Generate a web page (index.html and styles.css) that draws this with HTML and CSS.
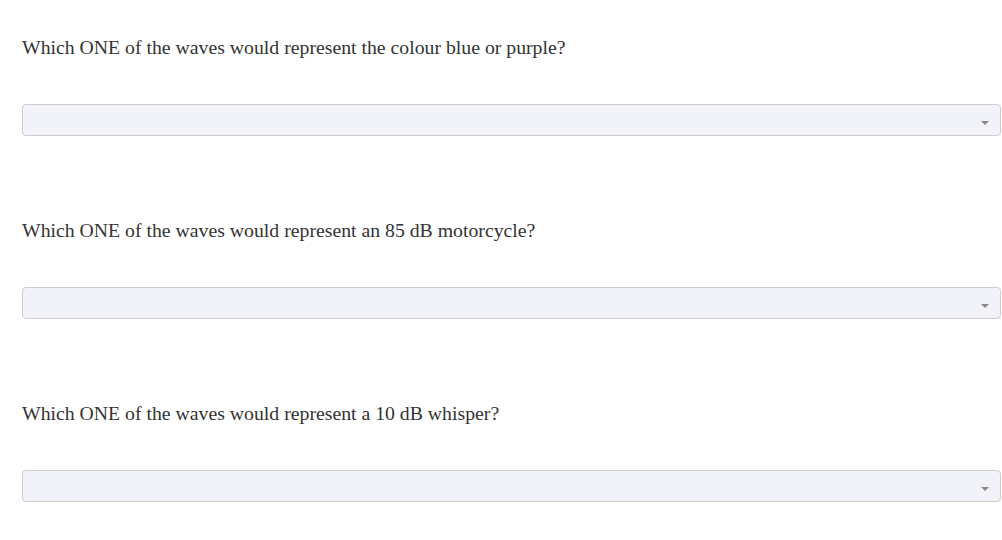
FILE: index.html
```html
<!DOCTYPE html>
<html>
<head>
<meta charset="utf-8">
<link rel="stylesheet" href="styles.css">
</head>
<body>
<div class="quiz">
  <div class="question">
    <p class="prompt">Which ONE of the waves would represent the colour blue or purple?</p>
    <div class="select"><span class="arrow"></span></div>
  </div>
  <div class="question">
    <p class="prompt">Which ONE of the waves would represent an 85 dB motorcycle?</p>
    <div class="select"><span class="arrow"></span></div>
  </div>
  <div class="question">
    <p class="prompt">Which ONE of the waves would represent a 10 dB whisper?</p>
    <div class="select"><span class="arrow"></span></div>
  </div>
</div>
</body>
</html>
```
FILE: styles.css
```css
html, body {
  margin: 0;
  padding: 0;
  background: #ffffff;
}
.quiz {
  padding: 35px 0 0 22px;
  display: flex;
  flex-direction: column;
  gap: 82px;
}
.question {
  display: flex;
  flex-direction: column;
  gap: 45px;
}
.prompt {
  margin: 0;
  font-family: "Liberation Serif", "Times New Roman", serif;
  font-size: 19.75px;
  line-height: 24px;
  color: #333333;
}
.select {
  box-sizing: border-box;
  height: 32px;
  margin-right: 1px;
  border: 1px solid #cccccc;
  border-radius: 4px;
  background: #f2f3f8;
  display: flex;
  align-items: center;
  justify-content: flex-end;
  padding-right: 11px;
}
.arrow {
  width: 0;
  height: 0;
  border-left: 4px solid transparent;
  border-right: 4px solid transparent;
  border-top: 4px solid #888888;
  margin-top: 5px;
}
```
